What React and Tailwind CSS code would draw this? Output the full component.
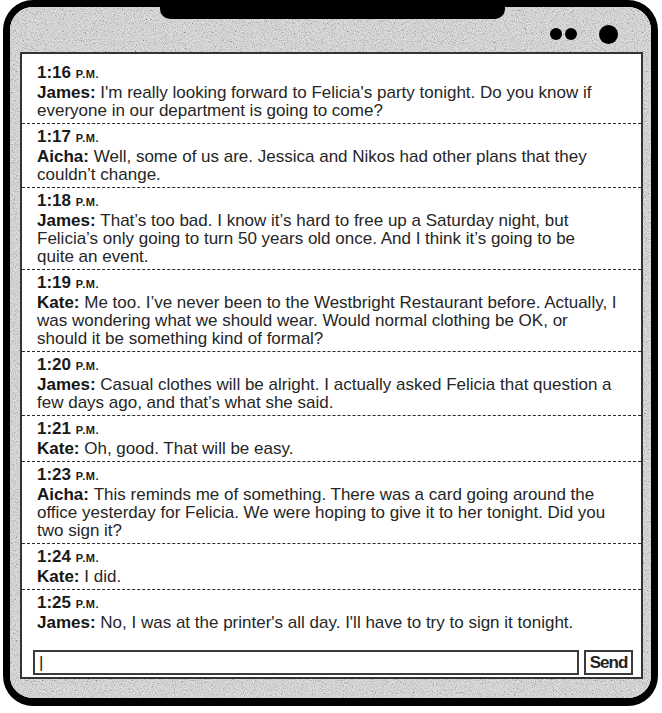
import React from 'react';

// line breaks follow the screenshot
const messages = [
  {
    time: '1:16', name: 'James',
    lines: ["I'm really looking forward to Felicia's party tonight. Do you know if", 'everyone in our department is going to come?'],
  },
  {
    time: '1:17', name: 'Aicha',
    lines: ['Well, some of us are. Jessica and Nikos had other plans that they', 'couldn\u2019t change.'],
  },
  {
    time: '1:18', name: 'James',
    lines: [
      'That\u2019s too bad. I know it\u2019s hard to free up a Saturday night, but',
      'Felicia\u2019s only going to turn 50 years old once. And I think it\u2019s going to be',
      'quite an event.',
    ],
  },
  {
    time: '1:19', name: 'Kate',
    lines: [
      'Me too. I\u2019ve never been to the Westbright Restaurant before. Actually, I',
      'was wondering what we should wear. Would normal clothing be OK, or',
      'should it be something kind of formal?',
    ],
  },
  {
    time: '1:20', name: 'James',
    lines: ['Casual clothes will be alright. I actually asked Felicia that question a', 'few days ago, and that\u2019s what she said.'],
  },
  { time: '1:21', name: 'Kate', lines: ['Oh, good. That will be easy.'] },
  {
    time: '1:23', name: 'Aicha',
    lines: [
      'This reminds me of something. There was a card going around the',
      'office yesterday for Felicia. We were hoping to give it to her tonight. Did you',
      'two sign it?',
    ],
  },
  { time: '1:24', name: 'Kate', lines: ['I did.'] },
  { time: '1:25', name: 'James', lines: ["No, I was at the printer's all day. I'll have to try to sign it tonight."] },
];

function Grain() {
  // speckled bezel texture from the scan
  return (
    <svg className="absolute inset-0 w-full h-full" aria-hidden="true">
      <filter id="grain">
        <feTurbulence type="fractalNoise" baseFrequency="0.9" numOctaves="2" seed="4" />
        <feColorMatrix type="saturate" values="0" />
        <feComponentTransfer>
          <feFuncR type="linear" slope="2.8" intercept="-0.7" />
          <feFuncG type="linear" slope="2.8" intercept="-0.7" />
          <feFuncB type="linear" slope="2.8" intercept="-0.7" />
        </feComponentTransfer>
      </filter>
      <rect width="100%" height="100%" fill="#cfcfcf" />
      <rect width="100%" height="100%" filter="url(#grain)" opacity="0.65" />
    </svg>
  );
}

function Message({ msg, last }) {
  return (
    <div className={`px-[15px] pt-[3px] pb-[3px] ${last ? '' : 'border-b border-dashed border-[#2a2a2a]'}`}>
      <div className="font-bold text-[17px] leading-[20px] text-[#1a1a1a]">
        {msg.time} <span className="text-[11px] tracking-[0.5px]">P.M.</span>
      </div>
      <div className="text-[17px] leading-[18px] text-[#262626] whitespace-nowrap">
        {msg.lines.map((line, i) => (
          <div key={i}>
            {i === 0 && <span className="font-bold text-[#161616]">{msg.name}: </span>}
            {line}
          </div>
        ))}
      </div>
    </div>
  );
}

export default function App() {
  return (
    <div className="w-[662px] h-[713px] bg-white" style={{ fontFamily: '"Liberation Sans", Arial, sans-serif' }}>
      <div className="relative isolate ml-[3px] w-[655px] h-[706px] border-[7px] border-b-[8px] border-black rounded-[30px] overflow-hidden flex flex-col pt-[45px] pl-[10px] pr-[8px] pb-[19px]">
        <Grain />
        {/* notch */}
        <div className="absolute top-0 left-[150px] w-[345px] h-[12px] bg-black rounded-b-[10px]" />
        {/* camera dots */}
        <div className="absolute top-[21px] left-[540px] w-[12px] h-[12px] rounded-full bg-black" />
        <div className="absolute top-[21px] left-[555px] w-[12px] h-[12px] rounded-full bg-black" />
        <div className="absolute top-[18px] left-[589px] w-[19px] h-[19px] rounded-full bg-black" />

        <div className="relative z-10 flex-1 min-h-0 overflow-hidden border-2 border-[#333] bg-white flex flex-col">
          <div className="pt-[6px] flex-1">
            {messages.map((m, i) => (
              <Message key={m.time} msg={m} last={i === messages.length - 1} />
            ))}
          </div>
          <div className="flex gap-[5px] pl-[11px] pr-[8px] pb-[2px]">
            <div className="flex-1 h-[25px] border-2 border-[#3a3a3a] flex items-center pl-[4px] text-[17px] text-[#222]">
              |
            </div>
            <button className="w-[49px] h-[25px] border-2 border-[#3a3a3a] text-[17px] font-semibold text-[#222] tracking-[-1px] leading-none">
              Send
            </button>
          </div>
        </div>
      </div>
    </div>
  );
}
